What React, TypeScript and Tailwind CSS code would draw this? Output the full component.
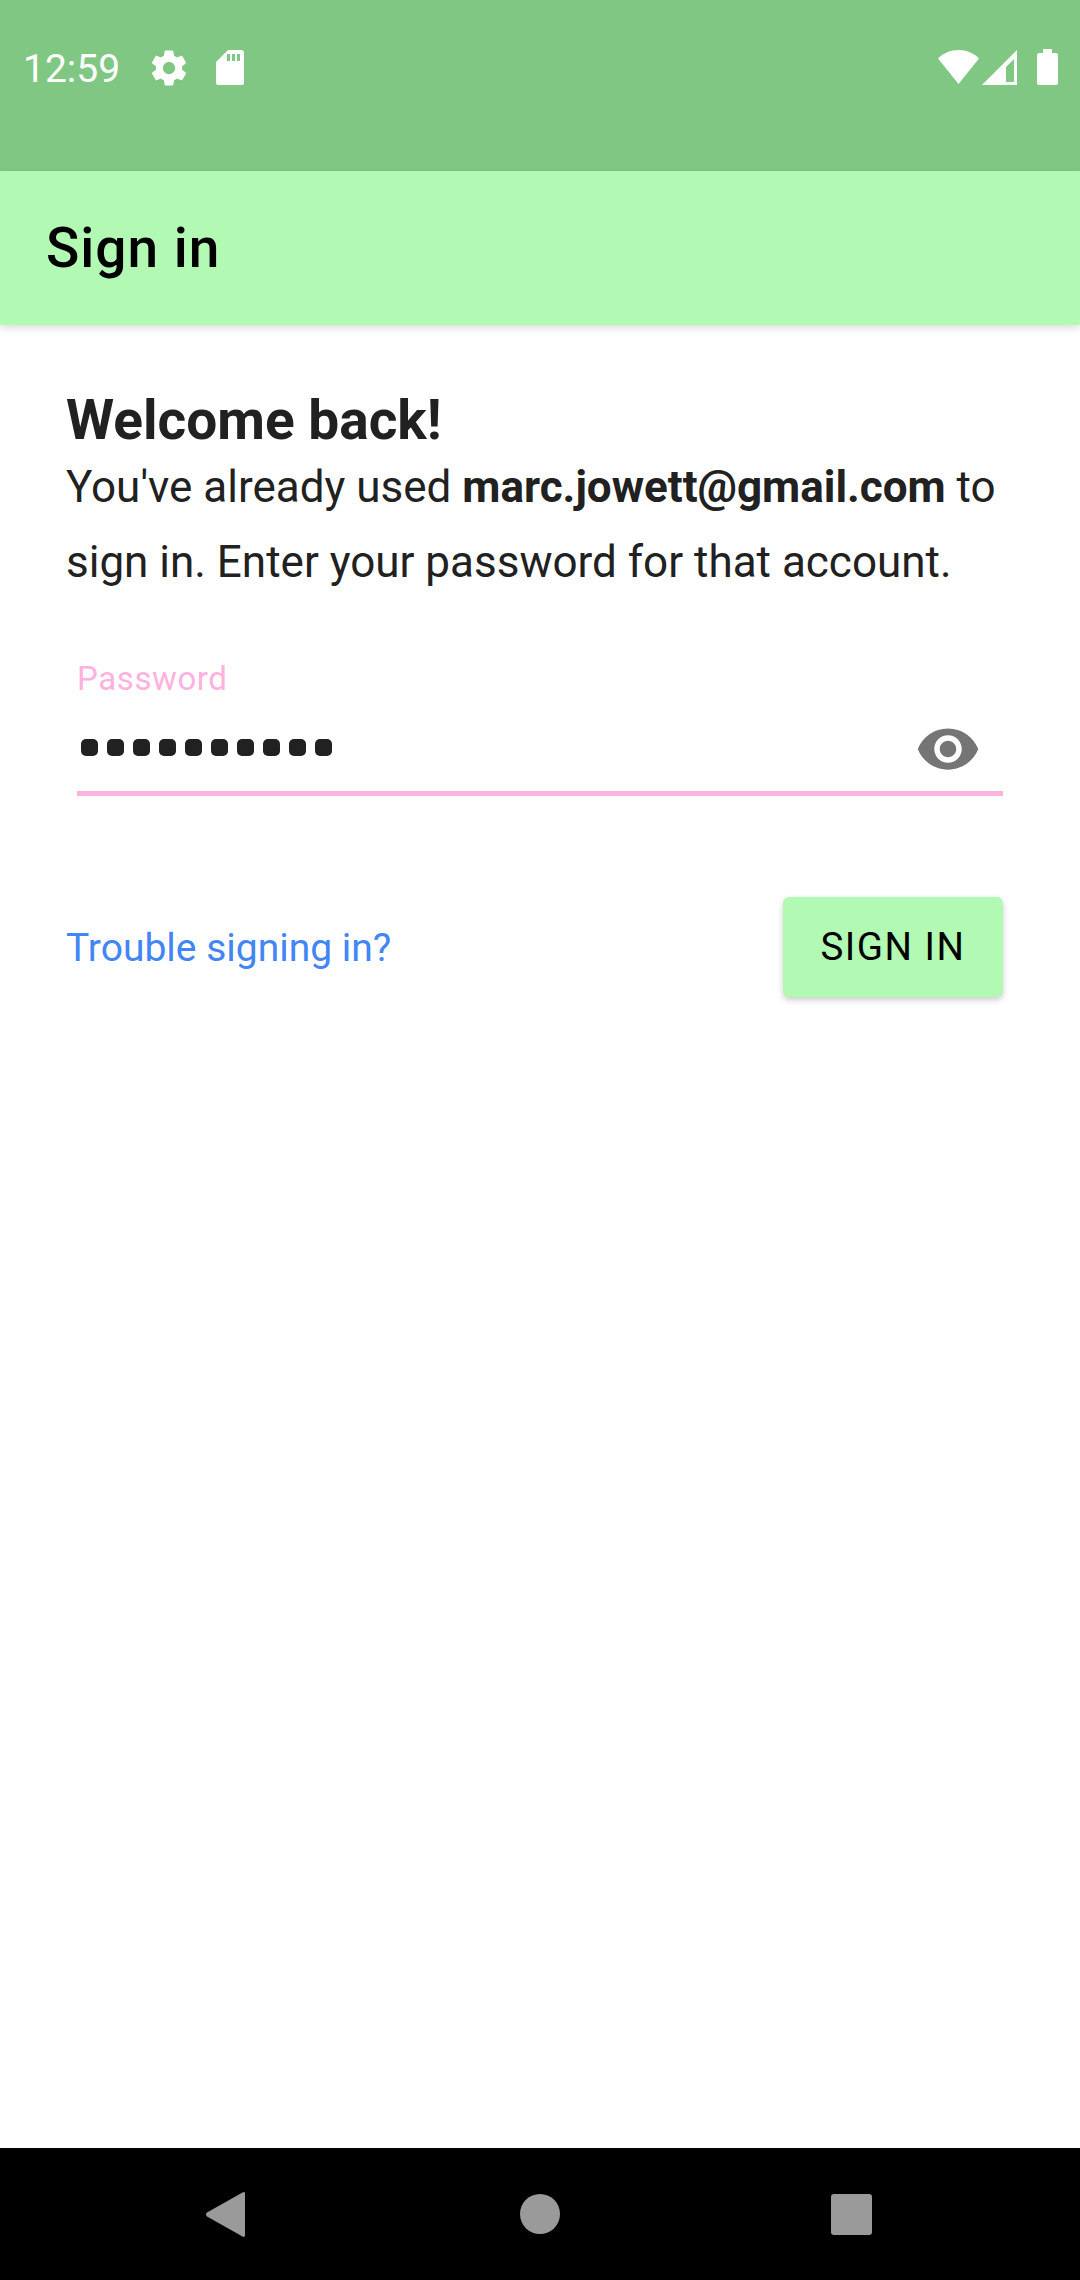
import React from "react";

const roboto = { fontFamily: "Roboto, sans-serif" };

function StatusIcons() {
  return (
    <div className="flex items-start h-[171px] pt-[47px] pl-[23px] pr-[22px]">
      <span className="text-[39px] leading-[44px] text-white font-normal w-[125px]" style={roboto}>12:59</span>
      <svg viewBox="0 0 24 24" className="w-[42px] h-[42px] fill-white">
        <path d="M19.43 12.98c.04-.32.07-.64.07-.98s-.03-.66-.07-.98l2.11-1.65c.19-.15.24-.42.12-.64l-2-3.46c-.12-.22-.39-.3-.61-.22l-2.49 1c-.52-.4-1.08-.73-1.69-.98l-.38-2.65C14.46 2.18 14.25 2 14 2h-4c-.25 0-.46.18-.49.42l-.38 2.65c-.61.25-1.17.59-1.69.98l-2.49-1c-.23-.09-.49 0-.61.22l-2 3.46c-.13.22-.07.49.12.64l2.11 1.65c-.04.32-.07.65-.07.98s.03.66.07.98l-2.11 1.65c-.19.15-.24.42-.12.64l2 3.46c.12.22.39.3.61.22l2.49-1c.52.4 1.08.73 1.69.98l.38 2.65c.03.24.24.42.49.42h4c.25 0 .46-.18.49-.42l.38-2.65c.61-.25 1.17-.59 1.69-.98l2.49 1c.23.09.49 0 .61-.22l2-3.46c.12-.22.07-.49-.12-.64l-2.11-1.65zM12 15.5c-1.93 0-3.5-1.57-3.5-3.5s1.57-3.5 3.5-3.5 3.5 1.57 3.5 3.5-1.57 3.5-3.5 3.5z" />
      </svg>
      <svg viewBox="0 0 28 35" className="w-[28px] h-[35px] ml-[26px] mt-[3px]">
        <path fillRule="evenodd" fill="#fff" d="M12 0h13a3 3 0 0 1 3 3v30a2 2 0 0 1-2 2H2a2 2 0 0 1-2-2V12zM11 4v7h3V4zM16 4v7h3V4zM21 4v7h3V4z" />
      </svg>
      <div className="flex-1" />
      <svg viewBox="0 0 41 35" className="w-[41px] h-[35px] mt-[3px]">
        <path fill="#fff" d="M0 8.500C5.500 3 12.500 0 20.500 0S35.500 3 41 8.500L20.500 34z" />
      </svg>
      <svg viewBox="0 0 35 35" className="w-[35px] h-[35px] ml-[3px] mt-[3px]">
        <path fillRule="evenodd" fill="#fff" d="M35 0v35H0zM32 9l-8 8v15h8z" />
      </svg>
      <svg viewBox="0 0 21 36" className="w-[21px] h-[36px] ml-[20px] mt-[2px]">
        <path fill="#fff" d="M6 0h9v4h4a2 2 0 0 1 2 2v28a2 2 0 0 1-2 2H2a2 2 0 0 1-2-2V6a2 2 0 0 1 2-2h4z" />
      </svg>
    </div>
  );
}

export default function App() {
  return (
    <div className="w-[1080px] h-[2280px] flex flex-col bg-white overflow-hidden">
      <div className="bg-[#81c784]">
        <StatusIcons />
      </div>
      <header className="h-[154px] bg-[#b2fab4] flex items-center pl-[46px] shadow-[0_3px_8px_rgba(0,0,0,0.14)] relative">
        <h1 className="text-[55px] leading-none text-black font-medium tracking-[1px]" style={roboto}>Sign in</h1>
      </header>
      <main className="flex-1 flex flex-col px-[66px] pt-[66px]" style={roboto}>
        <h2 className="text-[55px] leading-[59px] font-bold text-[#212121]">Welcome back!</h2>
        <p className="text-[44px] leading-[75px] text-[#212121]">
          You've already used <b className="font-bold">marc.jowett@gmail.com</b> to sign in. Enter your password for that account.
        </p>
        <div className="mx-[11px] mt-[59px]">
          <div className="text-[33px] leading-[40px] text-[#ffb2dd] tracking-[0.6px]">Password</div>
          <div className="flex items-center justify-between h-[97px] border-b-[5px] border-[#ffb2dd] pt-[4px] pl-[4px] pr-[22px]">
            <div className="flex gap-[9px]">
              {Array.from({ length: 10 }).map((_, i) => (
                <span key={i} className="w-[17px] h-[17px] rounded-[5px] bg-[#212121]" />
              ))}
            </div>
            <svg viewBox="0 0 24 24" className="w-[66px] h-[66px] mt-[4px] fill-[#757575]">
              <path d="M12 4.500C7 4.500 2.730 7.610 1 12c1.730 4.390 6 7.500 11 7.500s9.270-3.110 11-7.500c-1.730-4.390-6-7.500-11-7.500zM12 17c-2.760 0-5-2.240-5-5s2.240-5 5-5 5 2.240 5 5-2.240 5-5 5zm0-8c-1.660 0-3 1.340-3 3s1.340 3 3 3 3-1.340 3-3-1.340-3-3-3z" />
            </svg>
          </div>
        </div>
        <div className="flex items-center justify-between mt-[101px] pr-[11px]">
          <a className="text-[39px] leading-[48px] pt-[2px] text-[#4285f4]">Trouble signing in?</a>
          <button className="w-[220px] h-[100px] rounded-[6px] bg-[#b2fab4] text-black text-[38.5px] font-normal tracking-[1.5px] shadow-[0_3px_6px_rgba(0,0,0,0.2)]">SIGN IN</button>
        </div>
      </main>
      <nav className="h-[132px] bg-black flex items-center">
        <div className="flex items-center pl-[206px]">
          <svg viewBox="0 0 39 45" className="w-[39px] h-[45px]">
            <path fill="#9a9a9a" d="M38 0a1.500 1.500 0 0 1 1 1.500v42a1.500 1.500 0 0 1-2.500 1L1 24.500a2.500 2.500 0 0 1 0-4L36.500.500z" />
          </svg>
          <span className="w-[40px] h-[40px] ml-[275px] rounded-full bg-[#9a9a9a]" />
          <span className="w-[41px] h-[41px] ml-[271px] rounded-[3px] bg-[#9a9a9a]" />
        </div>
      </nav>
    </div>
  );
}
